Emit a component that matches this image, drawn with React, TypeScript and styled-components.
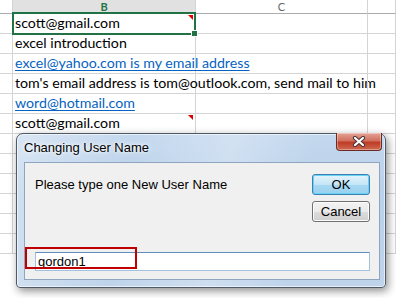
import React from "react";
import styled, { createGlobalStyle, css } from "styled-components";

const GlobalStyle = createGlobalStyle`
  html, body {
    margin: 0;
    padding: 0;
    background: #ffffff;
    overflow: hidden;
  }
  #root {
    position: relative;
    width: 396px;
    height: 298px;
  }
`;

const rows = [
  { text: "scott@gmail.com", selected: true, comment: true },
  { text: "excel introduction" },
  { text: "excel@yahoo.com is my email address", link: true },
  { text: "tom's email address is tom@outlook.com, send mail to him" },
  { text: "word@hotmail.com", link: true },
  { text: "scott@gmail.com", comment: true },
  { text: "" },
  { text: "" },
  { text: "" },
  { text: "" },
  { text: "" },
  { text: "" },
];

const App: React.FC = () => {
  return (
    <>
      <GlobalStyle />
      <Sheet>
        <HeaderCell />
        <HeaderCell $active>B</HeaderCell>
        <HeaderCell>C</HeaderCell>
        <HeaderCell />
        {rows.map((row, i) => (
          <React.Fragment key={i}>
            <Cell />
            <Cell $selected={row.selected}>
              <CellText $link={row.link}>{row.text}</CellText>
              {row.comment && <CommentMark />}
              {row.selected && (
                <Selection>
                  <Handle />
                </Selection>
              )}
            </Cell>
            <Cell />
            <Cell />
          </React.Fragment>
        ))}
      </Sheet>

      <Dialog>
        <TitleBar>
          <Title>Changing User Name</Title>
          <CloseButton>
            <svg width="18" height="11" viewBox="0 0 18 11">
              <path d="M5 2 L13 9 M13 2 L5 9" stroke="#4a3434" strokeWidth="4.2" strokeLinecap="round" />
              <path d="M5 2 L13 9 M13 2 L5 9" stroke="#ffffff" strokeWidth="2.2" strokeLinecap="round" />
            </svg>
          </CloseButton>
        </TitleBar>
        <Client>
          <TopRow>
            <Prompt>Please type one New User Name</Prompt>
            <Buttons>
              <PushButton $default>OK</PushButton>
              <PushButton>Cancel</PushButton>
            </Buttons>
          </TopRow>
          <InputWrap>
            <TextInput>gordon1</TextInput>
            <Highlight />
          </InputWrap>
        </Client>
      </Dialog>
    </>
  );
};

const Sheet = styled.div`
  display: grid;
  grid-template-columns: 13px 183px 172px 1fr;
  grid-template-rows: 14px;
  grid-auto-rows: 20px;
  font-family: Lato, "Liberation Sans", sans-serif;
  font-size: 14.2px;
  color: #000;
`;

const HeaderCell = styled.div<{ $active?: boolean }>`
  box-sizing: border-box;
  border-right: 1px solid #d4d4d4;
  border-bottom: 1px solid #ababab;
  background: ${(p) => (p.$active ? "#e1e1e1" : "#ffffff")};
  color: ${(p) => (p.$active ? "#217346" : "#666666")};
  font-weight: ${(p) => (p.$active ? 700 : 400)};
  font-size: 11px;
  line-height: 13px;
  display: flex;
  align-items: center;
  justify-content: center;
  overflow: hidden;
`;

const Cell = styled.div<{ $selected?: boolean }>`
  position: relative;
  box-sizing: border-box;
  border-right: 1px solid #d4d4d4;
  border-bottom: 1px solid #d4d4d4;
  display: flex;
  align-items: flex-end;
  padding: 0 0 1px 2px;
  overflow: visible;
  z-index: ${(p) => (p.$selected ? 2 : 1)};
`;

const CellText = styled.span<{ $link?: boolean }>`
  white-space: nowrap;
  line-height: 18px;
  ${(p) =>
    p.$link &&
    css`
      color: #0563c1;
      text-decoration: underline;
      text-underline-offset: 2px;
    `}
`;

const CommentMark = styled.span`
  position: absolute;
  top: 1px;
  right: 2px;
  width: 0;
  height: 0;
  border-top: 5px solid #e00000;
  border-left: 5px solid transparent;
`;

const Selection = styled.div`
  position: absolute;
  left: -1px;
  top: -2px;
  right: -1px;
  bottom: -2px;
  border: 2px solid #217346;
  pointer-events: none;
`;

const Handle = styled.span`
  position: absolute;
  right: -4px;
  bottom: -4px;
  width: 5px;
  height: 5px;
  background: #217346;
  border: 1px solid #ffffff;
`;

const Dialog = styled.div`
  position: absolute;
  left: 16px;
  top: 133px;
  width: 370px;
  height: 155px;
  box-sizing: border-box;
  padding: 0 5px 7px 7px;
  border: 1px solid #4f5a68;
  border-radius: 7px 7px 4px 4px;
  background: linear-gradient(
      100deg,
      rgba(255, 255, 255, 0.35) 0%,
      rgba(255, 255, 255, 0) 30%,
      rgba(255, 255, 255, 0.25) 55%,
      rgba(255, 255, 255, 0) 75%
    ),
    linear-gradient(#c4d8ee, #b9d1ea 40%, #bfd4eb);
  box-shadow: 0 0 0 1px rgba(255, 255, 255, 0.6) inset, 2px 3px 8px rgba(0, 0, 0, 0.45);
  display: flex;
  flex-direction: column;
  font-family: "Liberation Sans", Arial, sans-serif;
  font-size: 13px;
  color: #000;
  z-index: 10;
`;

const TitleBar = styled.div`
  height: 28px;
  display: flex;
  align-items: flex-start;
  justify-content: space-between;
`;

const Title = styled.span`
  margin-top: 6px;
  padding: 0 4px 0 0;
  text-shadow: 0 0 6px #ffffff, 0 0 3px #ffffff;
`;

const CloseButton = styled.div`
  width: 46px;
  height: 18px;
  margin-top: -1px;
  margin-right: -2px;
  box-sizing: border-box;
  border: 1px solid #6b2a22;
  border-top: none;
  border-radius: 0 0 4px 4px;
  background: linear-gradient(#e5a397 0%, #d0705d 45%, #bf3b25 55%, #cf6a52 100%);
  box-shadow: inset 0 0 0 1px rgba(255, 255, 255, 0.35);
  display: flex;
  align-items: center;
  justify-content: center;
`;

const Client = styled.div`
  flex: 1;
  box-sizing: border-box;
  background: #f0f0f0;
  border: 1px solid #8ea4bf;
  padding: 11px 9px 8px 10px;
  display: flex;
  flex-direction: column;
  justify-content: space-between;
`;

const TopRow = styled.div`
  display: flex;
  justify-content: space-between;
  align-items: flex-start;
`;

const Prompt = styled.span`
  margin-top: 3px;
`;

const Buttons = styled.div`
  display: flex;
  flex-direction: column;
  gap: 6px;
`;

const PushButton = styled.div<{ $default?: boolean }>`
  width: 58px;
  height: 21px;
  box-sizing: border-box;
  border-radius: 3px;
  display: flex;
  align-items: center;
  justify-content: center;
  ${(p) =>
    p.$default
      ? css`
          border: 1px solid #3c7fb1;
          background: linear-gradient(#e5f4fc 0%, #c4e5f6 50%, #a8d8f2 51%, #98d1ef 100%);
          box-shadow: inset 0 0 0 1px #68d3f5;
        `
      : css`
          border: 1px solid #707070;
          background: linear-gradient(#f2f2f2 0%, #ebebeb 50%, #dddddd 51%, #cfcfcf 100%);
          box-shadow: inset 0 0 0 1px #fcfcfc;
        `}
`;

const InputWrap = styled.div`
  position: relative;
`;

const TextInput = styled.div`
  height: 19px;
  box-sizing: border-box;
  background: #ffffff;
  border: 1px solid #a3c0dd;
  border-top-color: #5f8fbe;
  padding: 0 0 0 2px;
  line-height: 17px;
`;

const Highlight = styled.div`
  position: absolute;
  left: -10px;
  top: -5px;
  width: 112px;
  height: 22px;
  box-sizing: border-box;
  border: 2px solid #c00000;
`;

export default App;
